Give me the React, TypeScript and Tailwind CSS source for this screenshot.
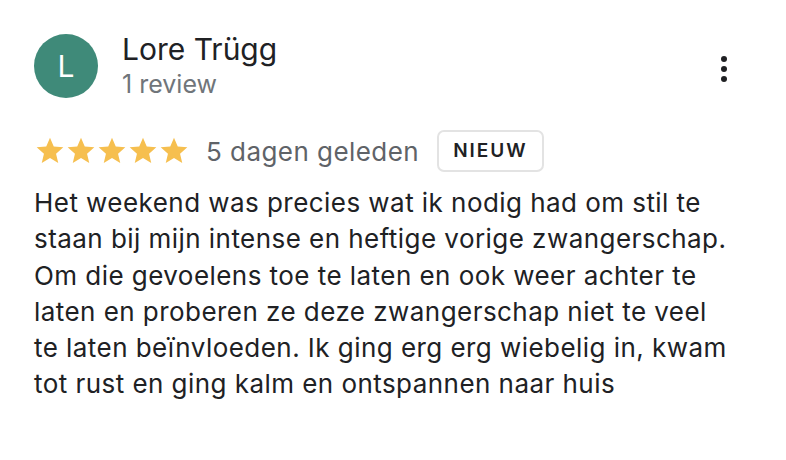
const lines = [
  'Het weekend was precies wat ik nodig had om stil te',
  'staan bij mijn intense en heftige vorige zwangerschap.',
  'Om die gevoelens toe te laten en ook weer achter te',
  'laten en proberen ze deze zwangerschap niet te veel',
  'te laten beïnvloeden. Ik ging erg erg wiebelig in, kwam',
  'tot rust en ging kalm en ontspannen naar huis',
];

function StarIcon() {
  return (
    <svg width="32" height="32" viewBox="0 0 24 24" className="-mx-[0.5px]">
      <path
        fill="#f6bf4f"
        d="M12 17.27L18.18 21l-1.64-7.03L22 9.24l-7.19-.61L12 2 9.19 8.63 2 9.24l5.46 4.73L5.82 21z"
      />
    </svg>
  );
}

export default function App() {
  return (
    <div className="w-[786px] h-[460px] bg-white font-['Inter',sans-serif] text-[#202124] pl-[34px] pr-[40px] pt-[34px]">
      <div className="flex items-start">
        <div className="w-16 h-16 rounded-full bg-[#3f8a79] flex items-center justify-center text-white text-[30px] shrink-0">
          L
        </div>
        <div className="ml-6 flex-1 -mt-[3px]">
          <div className="text-[30px] leading-[36px]">Lore Trügg</div>
          <div className="mt-[2px] text-[25px] leading-[30px] text-[#70757a]">1 review</div>
        </div>
        <div className="mt-[22px] mr-[19px] flex flex-col items-center gap-[4px]">
          <span className="w-[6px] h-[6px] rounded-full bg-[#202124]" />
          <span className="w-[6px] h-[6px] rounded-full bg-[#202124]" />
          <span className="w-[6px] h-[6px] rounded-full bg-[#202124]" />
        </div>
      </div>
      <div className="flex items-center mt-[31px]">
        <div className="flex">
          {[0, 1, 2, 3, 4].map((i) => (
            <StarIcon key={i} />
          ))}
        </div>
        <span className="ml-[17px] text-[26px] tracking-[0.45px] text-[#5f6368]">5 dagen geleden</span>
        <span className="ml-[18px] h-[42px] px-[14px] flex items-center border-2 border-[#e3e3e3] rounded-[7px] text-[19px] font-semibold tracking-[2px] text-[#202124]">
          NIEUW
        </span>
      </div>
      <p className="mt-[13px] text-[26px] leading-[36.3px] tracking-[0.45px] whitespace-nowrap">
        {lines.map((l, i) => (
          <span key={i}>
            {l}
            <br />
          </span>
        ))}
      </p>
    </div>
  );
}
